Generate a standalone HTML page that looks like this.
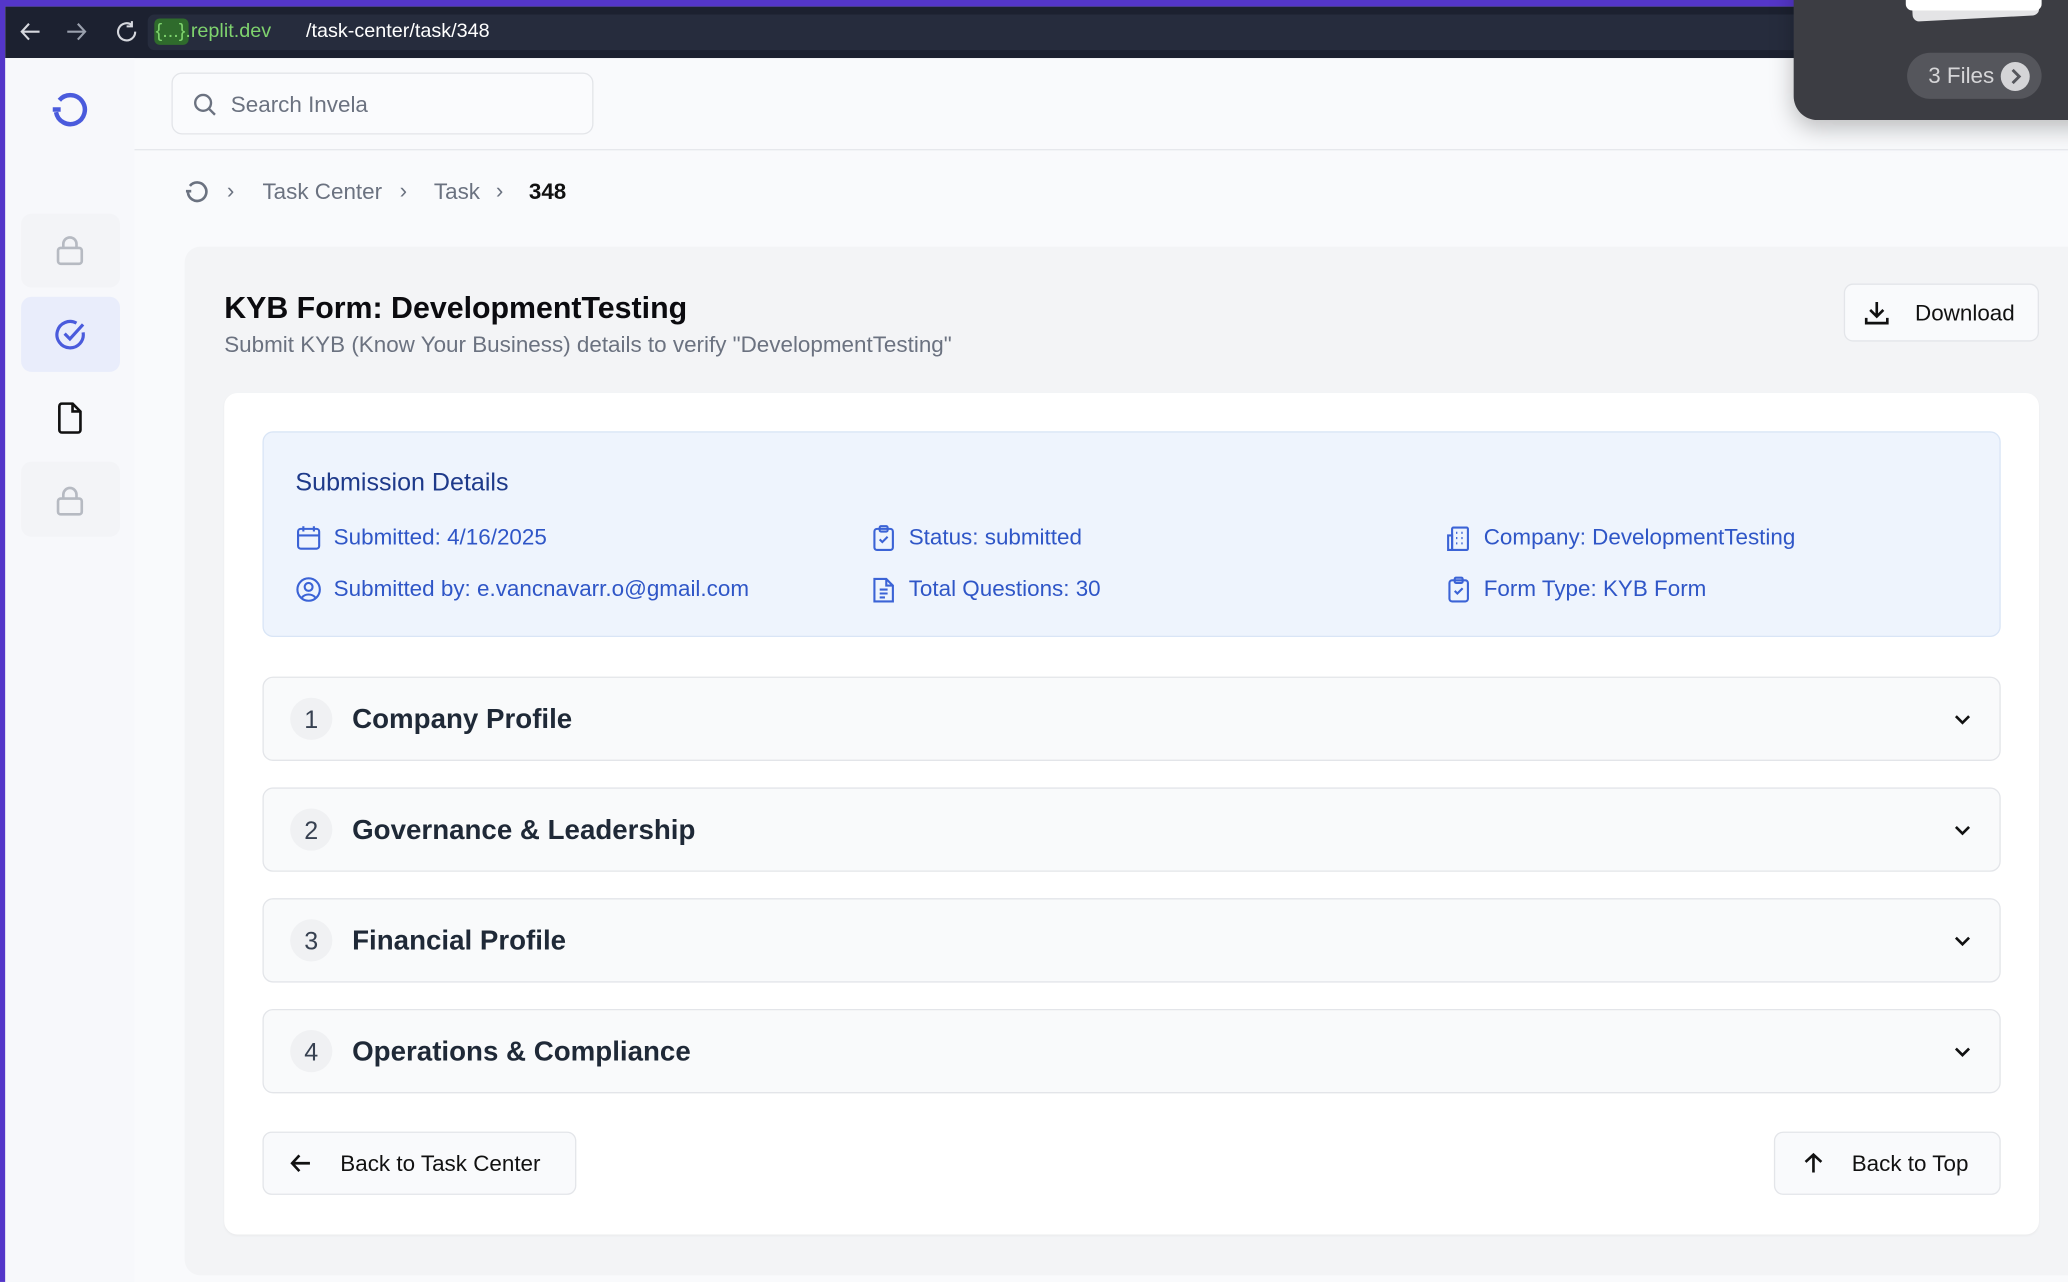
<!DOCTYPE html>
<html><head><meta charset="utf-8"><style>
*{box-sizing:border-box;margin:0;padding:0}
html,body{width:2068px;height:1282px;overflow:hidden;background:#f9fafc}
#s{position:absolute;left:0;top:0;width:1568px;height:972px;transform:scale(1.31888);transform-origin:0 0;font-family:"Liberation Sans",sans-serif;background:#f9fafc}
.a{position:absolute}
svg{position:absolute}
.t{position:absolute;white-space:nowrap}
.acc{position:absolute;left:199px;width:1318px;height:64px;background:#f9fafb;border:1px solid #e3e5e9;border-radius:8px}
.acc .n{position:absolute;left:20px;top:15px;width:32px;height:32px;border-radius:16px;background:#f0f1f3;color:#374151;font-size:19px;text-align:center;line-height:33px;padding-top:1px}
.acc .l{position:absolute;left:67px;top:20px;font-size:21px;font-weight:600;color:#1f2937}
.acc svg{left:1280px;top:24px}
.det{color:#2f56c7;font-size:17px}
.btn{position:absolute;background:#f9fafc;border:1px solid #e3e5e9;border-radius:7px;font-size:17px;color:#111}
</style></head><body><div id="s">
<div class="a" style="left:0;top:0;width:1568px;height:5px;background:#5436c9"></div>
<div class="a" style="left:0;top:0;width:4px;height:972px;background:#5436c9"></div>
<div class="a" style="left:4px;top:5px;width:1564px;height:39px;background:#1c2130"></div>
<div class="a" style="left:112px;top:11px;width:1300px;height:27px;background:#262c3d;border-radius:5px"></div>
<svg style="left:14px;top:15px" width="95" height="18" viewBox="0 0 95 18" fill="none" stroke="#d6d8de" stroke-width="1.6"><path d="M16 9H3M8 3L2.5 9 8 15"/><path d="M37 9h13M45 3l5.5 6-5.5 6" stroke="#9aa0ad"/><path d="M86 4a6.5 6.5 0 1 0 2.5 5M86 1v4h-4"/></svg>
<div class="a" style="left:117px;top:14px;width:26px;height:20px;background:#2f6b2c;border-radius:4px"></div>
<div class="t" style="left:118px;top:15px;font-size:15px;color:#7fd36e">{...}.replit.dev</div>
<div class="t" style="left:232px;top:15px;font-size:15px;color:#fff">/task-center/task/348</div>
<div class="a" style="left:1360px;top:-20px;width:230px;height:111px;background:#3c3d43;border-radius:0 0 0 18px;box-shadow:0 6px 18px rgba(0,0,0,.25)"></div>
<div class="a" style="left:1450px;top:0;width:96px;height:14px;background:#e4e4e6;border-radius:0 0 5px 5px;transform:rotate(-3deg)"></div>
<div class="a" style="left:1445px;top:0;width:103px;height:8px;background:#fff;border-radius:0 0 5px 5px"></div>
<div class="a" style="left:1446px;top:40px;width:102px;height:35px;background:#55565c;border-radius:18px"></div>
<div class="t" style="left:1462px;top:48px;font-size:17px;color:#d6d6d8">3 Files</div>
<div class="a" style="left:1517px;top:47px;width:22px;height:22px;border-radius:11px;background:#d4d4d7"></div>
<svg style="left:1517px;top:47px" width="22" height="22"><path d="M9 6l5 5-5 5" stroke="#55565c" stroke-width="2.2" fill="none"/></svg>
<div class="a" style="left:4px;top:44px;width:98px;height:928px;background:#f7f8fb"></div>
<svg style="left:38px;top:68px" width="30" height="30" viewBox="0 0 30 30" fill="none" stroke="#4a5bdc" stroke-width="3.4"><path d="M7 8A11 11 0 1 1 4.5 17"/><path d="M2 15h6"/></svg>
<div class="a" style="left:16px;top:162px;width:75px;height:56px;background:#f3f4f7;border-radius:8px"></div>
<div class="a" style="left:16px;top:225px;width:75px;height:57px;background:#e9edfb;border-radius:8px"></div>
<div class="a" style="left:16px;top:350px;width:75px;height:57px;background:#f3f4f7;border-radius:8px"></div>
<svg style="left:42px;top:178px" width="22" height="24" fill="none" stroke="#b6bac2" stroke-width="2"><rect x="2" y="10" width="18" height="12" rx="2"/><path d="M6 10V7a5 5 0 0 1 10 0v3"/></svg>
<svg style="left:42px;top:368px" width="22" height="24" fill="none" stroke="#b6bac2" stroke-width="2"><rect x="2" y="10" width="18" height="12" rx="2"/><path d="M6 10V7a5 5 0 0 1 10 0v3"/></svg>
<svg style="left:41px;top:241px" width="25" height="25" fill="none" stroke="#4a5bdc" stroke-width="2.4"><path d="M22 11A10 10 0 1 1 17 4"/><path d="M8 12l4 4 10-11"/></svg>
<svg style="left:43px;top:305px" width="20" height="24" fill="none" stroke="#111" stroke-width="2"><path d="M2 3a2 2 0 0 1 2-2h8l6 6v14a2 2 0 0 1-2 2H4a2 2 0 0 1-2-2z"/><path d="M12 1v6h6"/></svg>
<div class="a" style="left:130px;top:55px;width:320px;height:47px;border:1px solid #e3e5e9;border-radius:8px;background:#fafbfd"></div>
<svg style="left:146px;top:70px" width="18" height="18" fill="none" stroke="#6b7280" stroke-width="1.8"><circle cx="8" cy="8" r="6"/><path d="M12.5 12.5L17 17"/></svg>
<div class="t" style="left:175px;top:70px;font-size:17px;color:#6b7280">Search Invela</div>
<div class="a" style="left:102px;top:113px;width:1466px;height:1px;background:#e5e7eb"></div>
<svg style="left:140px;top:136px" width="18" height="18" fill="none" stroke="#6b7280" stroke-width="2"><path d="M4 5A7 7 0 1 1 2.5 10"/><path d="M1 9h4"/></svg>
<div class="t" style="left:172px;top:135px;font-size:17px;color:#6b7280">›</div>
<div class="t" style="left:199px;top:136px;font-size:17px;color:#6b7280">Task Center</div>
<div class="t" style="left:303px;top:135px;font-size:17px;color:#6b7280">›</div>
<div class="t" style="left:329px;top:136px;font-size:17px;color:#6b7280">Task</div>
<div class="t" style="left:376px;top:135px;font-size:17px;color:#6b7280">›</div>
<div class="t" style="left:401px;top:136px;font-size:17px;color:#111;font-weight:600">348</div>
<div class="a" style="left:140px;top:187px;width:1440px;height:780px;background:#f3f4f6;border-radius:12px"></div>
<div class="t" style="left:170px;top:220px;font-size:23px;font-weight:600;color:#0b0b0f">KYB Form: DevelopmentTesting</div>
<div class="t" style="left:170px;top:252px;font-size:17px;color:#6b7280">Submit KYB (Know Your Business) details to verify "DevelopmentTesting"</div>
<div class="btn" style="left:1398px;top:215px;width:148px;height:44px"></div>
<svg style="left:1413px;top:227px" width="20" height="20" fill="none" stroke="#111" stroke-width="2"><path d="M10 2v11M5 8l5 5 5-5M2 14v4h16v-4"/></svg>
<div class="t" style="left:1452px;top:228px;font-size:17px;color:#111">Download</div>
<div class="a" style="left:170px;top:298px;width:1376px;height:638px;background:#fff;border-radius:10px;box-shadow:0 1px 2px rgba(0,0,0,.04)"></div>
<div class="a" style="left:199px;top:327px;width:1318px;height:156px;background:#eef4fd;border:1px solid #d9e5f6;border-radius:8px"></div>
<div class="t" style="left:224px;top:356px;font-size:19px;font-weight:500;color:#1e3a8a">Submission Details</div>
<svg style="left:224px;top:398px" width="20" height="20" fill="none" stroke="#3b63d6" stroke-width="1.6"><rect x="2" y="3" width="16" height="15" rx="2"/><path d="M2 8h16M6 1v4M14 1v4"/></svg>
<div class="t det" style="left:253px;top:398px">Submitted: 4/16/2025</div>
<svg style="left:224px;top:437px" width="20" height="20" fill="none" stroke="#3b63d6" stroke-width="1.6"><circle cx="10" cy="10" r="8.5"/><circle cx="10" cy="8" r="3"/><path d="M5 16a6 5 0 0 1 10 0"/></svg>
<div class="t det" style="left:253px;top:437px">Submitted by: e.vancnavarr.o@gmail.com</div>
<svg style="left:660px;top:398px" width="20" height="20" fill="none" stroke="#3b63d6" stroke-width="1.6"><rect x="3" y="3" width="14" height="16" rx="2"/><rect x="7" y="1" width="6" height="4" rx="1"/><path d="M7 11l2 2 4-4"/></svg>
<div class="t det" style="left:689px;top:398px">Status: submitted</div>
<svg style="left:660px;top:437px" width="20" height="20" fill="none" stroke="#3b63d6" stroke-width="1.6"><path d="M3 2h9l5 5v12H3z"/><path d="M12 2v5h5M7 10h6M7 13h6M7 16h4"/></svg>
<div class="t det" style="left:689px;top:437px">Total Questions: 30</div>
<svg style="left:1096px;top:398px" width="20" height="20" fill="none" stroke="#3b63d6" stroke-width="1.6"><rect x="5" y="2" width="12" height="17" rx="1"/><path d="M2 8h3v11H2zM8 6h1M12 6h1M8 10h1M12 10h1M8 14h1M12 14h1"/></svg>
<div class="t det" style="left:1125px;top:398px">Company: DevelopmentTesting</div>
<svg style="left:1096px;top:437px" width="20" height="20" fill="none" stroke="#3b63d6" stroke-width="1.6"><rect x="3" y="3" width="14" height="16" rx="2"/><rect x="7" y="1" width="6" height="4" rx="1"/><path d="M7 11l2 2 4-4"/></svg>
<div class="t det" style="left:1125px;top:437px">Form Type: KYB Form</div>
<div class="acc" style="top:513px"><div class="n">1</div><div class="l">Company Profile</div><svg width="16" height="16" fill="none" stroke="#111" stroke-width="2"><path d="M3 5l5 5 5-5"/></svg></div>
<div class="acc" style="top:597px"><div class="n">2</div><div class="l">Governance &amp; Leadership</div><svg width="16" height="16" fill="none" stroke="#111" stroke-width="2"><path d="M3 5l5 5 5-5"/></svg></div>
<div class="acc" style="top:681px"><div class="n">3</div><div class="l">Financial Profile</div><svg width="16" height="16" fill="none" stroke="#111" stroke-width="2"><path d="M3 5l5 5 5-5"/></svg></div>
<div class="acc" style="top:765px"><div class="n">4</div><div class="l">Operations &amp; Compliance</div><svg width="16" height="16" fill="none" stroke="#111" stroke-width="2"><path d="M3 5l5 5 5-5"/></svg></div>
<div class="btn" style="left:199px;top:858px;width:238px;height:48px"></div>
<svg style="left:219px;top:873px" width="18" height="18" fill="none" stroke="#111" stroke-width="2"><path d="M16 9H3M8 3L2.5 9 8 15"/></svg>
<div class="t" style="left:258px;top:873px;font-size:17px;color:#111">Back to Task Center</div>
<div class="btn" style="left:1345px;top:858px;width:172px;height:48px"></div>
<svg style="left:1366px;top:873px" width="18" height="18" fill="none" stroke="#111" stroke-width="2"><path d="M9 16V3M3 8l6-5.5L15 8"/></svg>
<div class="t" style="left:1404px;top:873px;font-size:17px;color:#111">Back to Top</div>
</div></body></html>
